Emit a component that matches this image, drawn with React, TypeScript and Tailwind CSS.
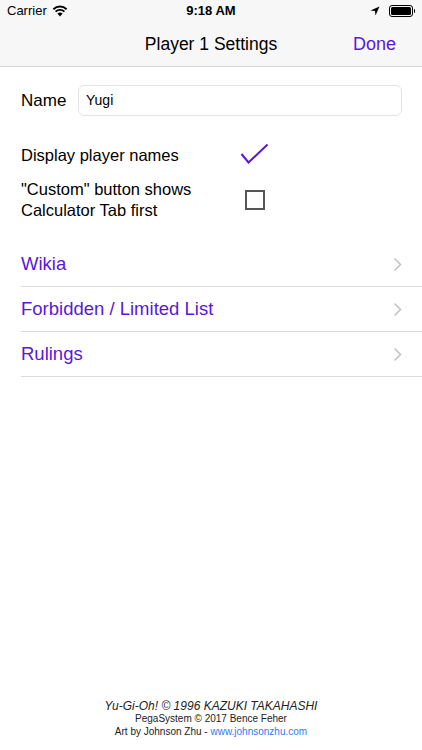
import React from 'react';

const PURPLE = 'text-[#5a17dc]';

const LinkRow = ({ label }: { label: string }) => (
  <div className="flex h-[45px] items-center justify-between border-b border-[#dcdcdc] pr-[20px] pt-[1px]">
    <span className={`text-[18.5px] ${PURPLE}`}>{label}</span>
    <svg width="9" height="15" viewBox="0 0 9 15" fill="none">
      <path d="M1.5 1.5 L7.5 7.5 L1.5 13.5" stroke="#c4c4c7" strokeWidth="1.6" />
    </svg>
  </div>
);

export default function App() {
  return (
    <div className="flex h-[750px] w-[422px] flex-col bg-white font-['Liberation_Sans',Arial,sans-serif] text-black">
      {/* status + nav */}
      <div className="border-b border-[#d6d6d6] bg-[#f7f7f7]">
        <div className="flex h-[22px] items-center justify-between px-[7px] text-[13px]">
          <div className="flex w-[120px] items-center gap-[5px]">
            <span>Carrier</span>
            <svg width="16" height="12" viewBox="0 0 16 12">
              <path d="M8 11.5 L5.4 8.6 A3.8 3.8 0 0 1 10.6 8.6 Z" fill="#000" />
              <path d="M3.6 6.6 A6.4 6.4 0 0 1 12.4 6.6" stroke="#000" strokeWidth="1.9" fill="none" />
              <path d="M1.4 4.2 A9.6 9.6 0 0 1 14.6 4.2" stroke="#000" strokeWidth="1.9" fill="none" />
            </svg>
          </div>
          <span className="font-bold">9:18 AM</span>
          <div className="flex w-[120px] items-center justify-end gap-[9px]">
            <svg width="10" height="10" viewBox="0 0 10 10">
              <path d="M9.5 0.5 L0.5 4.5 L5 5 L5.5 9.5 Z" fill="#000" />
            </svg>
            <div className="flex items-center">
              <div className="h-[12px] w-[24px] rounded-[3px] border border-black p-[1px]">
                <div className="h-full w-full rounded-[1.5px] bg-black" />
              </div>
              <div className="ml-[1px] h-[4px] w-[1.5px] rounded-r bg-black" />
            </div>
          </div>
        </div>
        <div className="relative flex h-[44px] items-center justify-center">
          <span className="text-[17.5px]">Player 1 Settings</span>
          <span className={`absolute right-[26px] text-[18px] ${PURPLE}`}>Done</span>
        </div>
      </div>

      {/* form */}
      <div className="flex flex-col pl-[21px]">
        <div className="mt-[18px] flex items-center pr-[20px]">
          <span className="w-[57px] text-[17px]">Name</span>
          <div className="flex h-[31px] flex-1 items-center rounded-[6px] border border-[#e4e4e4] px-[7px] text-[14px]">
            Yugi
          </div>
        </div>

        <div className="mt-[27px] flex items-center">
          <span className="w-[219px] text-[16.5px]">Display player names</span>
          <svg width="30" height="24" viewBox="0 0 30 24">
            <path d="M1.5 11 L8.5 19.5 L27.5 1.5" stroke="#5a17dc" strokeWidth="2" fill="none" />
          </svg>
        </div>

        <div className="mt-[11px] flex items-center">
          <span className="w-[224px] text-[16.5px] leading-[21px]">
            "Custom" button shows
            <br />
            Calculator Tab first
          </span>
          <div className="h-[20px] w-[20px] border-2 border-[#555]" />
        </div>

        <div className="mt-[21px] flex flex-col">
          <LinkRow label="Wikia" />
          <LinkRow label="Forbidden / Limited List" />
          <LinkRow label="Rulings" />
        </div>
      </div>

      {/* footer */}
      <div className="mt-auto mb-[12px] flex flex-col items-center text-[#222]">
        <span className="text-[12px] italic leading-[14px]">Yu-Gi-Oh! © 1996 KAZUKI TAKAHASHI</span>
        <span className="text-[10px] leading-[12px]">PegaSystem © 2017 Bence Feher</span>
        <span className="text-[10px] leading-[13px]">
          Art by Johnson Zhu - <span className="text-[#3478f6]">www.johnsonzhu.com</span>
        </span>
      </div>
    </div>
  );
}
